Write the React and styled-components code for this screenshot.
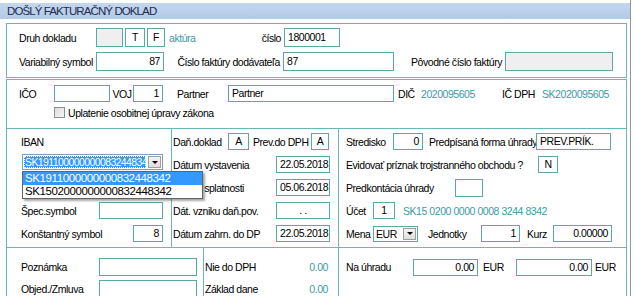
import React from 'react';
import styled, { createGlobalStyle } from 'styled-components';

const GlobalStyle = createGlobalStyle`
  body {
    margin: 0;
    background: #fff;
    font-family: "Liberation Sans", Arial, sans-serif;
    font-size: 10.5px;
    letter-spacing: -0.45px;
    color: #000;
  }
`;

const TEAL = '#6bb7b7';
const TEAL_TEXT = '#3c9aa8';

const Window = styled.div`
  width: 631px;
  height: 296px;
  box-sizing: border-box;
  border-right: 1px solid #8d9a9a;
  padding-top: 3px;
  overflow: hidden;
`;

const TitleBar = styled.div`
  height: 16px;
  line-height: 17px;
  padding-left: 7px;
  font-size: 11.5px;
  letter-spacing: -0.9px;
  color: #1d2b4c;
  background: linear-gradient(#c3d7ee, #b2cae6);
`;

const Body = styled.div`
  padding: 4px 3px 0 6px;
`;

const Box = styled.div`
  border: 1px solid ${TEAL};
  ${p => p.noTop && 'border-top: none;'}
  ${p => p.gapTop && `margin-top: ${p.gapTop}px;`}
`;

const Stack = styled.div`
  display: flex;
  flex-direction: column;
  gap: ${p => p.gap || 0}px;
  padding: ${p => p.pad || '0'};
`;

const Row = styled.div`
  display: flex;
  align-items: ${p => (p.top ? 'flex-start' : 'center')};
  padding-top: ${p => p.top || 0}px;
  box-sizing: border-box;
  height: ${p => p.h || 23}px;
  margin-left: ${p => p.ml || 0}px;
`;

const Label = styled.span`
  flex: none;
  width: ${p => (p.w ? `${p.w}px` : 'auto')};
  margin-left: ${p => p.ml || 0}px;
  text-align: ${p => (p.right ? 'right' : 'left')};
  padding-right: ${p => (p.right ? 3 : 0)}px;
  box-sizing: border-box;
  white-space: nowrap;
`;

const Teal = styled(Label)`
  color: ${TEAL_TEXT};
`;

const Input = styled.div`
  flex: none;
  box-sizing: border-box;
  width: ${p => p.w}px;
  height: ${p => p.h || 17}px;
  margin-left: ${p => p.ml || 0}px;
  border: 1px solid #5aa8a8;
  background: ${p => (p.disabled ? '#efefef' : '#fff')};
  padding: 0 3px;
  line-height: ${p => (p.h || 17) - 2}px;
  text-align: ${p => p.align || 'left'};
  white-space: nowrap;
  overflow: hidden;
`;

const Check = styled.span`
  width: 11px;
  height: 11px;
  box-sizing: border-box;
  border: 1px solid #8f8f8f;
  background: linear-gradient(135deg, #dcdcdc, #f6f6f6);
  margin-right: 3px;
`;

const Grid = styled.div`
  display: grid;
  grid-template-columns: ${p => p.cols};
`;

const Col = styled(Stack)`
  border-right: ${p => (p.last ? 'none' : `1px solid ${TEAL}`)};
`;

const SelectWrap = styled.div`
  position: relative;
  flex: none;
  display: flex;
  width: ${p => p.w}px;
  height: ${p => p.h || 16}px;
  margin-left: ${p => p.ml || 0}px;
  box-sizing: border-box;
  border: 1px solid ${p => (p.focus ? '#7f9db9' : '#5aa8a8')};
  background: #fff;
`;

const SelectValue = styled.div`
  flex: 1;
  overflow: hidden;
  white-space: nowrap;
  padding: 0 1px;
  line-height: ${p => p.lh}px;
  margin: 1px;
  ${p =>
    p.active &&
    `background: #3399ff; color: #fff; outline: 1px dotted #fff; outline-offset: -1px; letter-spacing: -0.6px;`}
`;

const ArrowBtn = styled.div`
  width: 13px;
  flex: none;
  margin: 1px;
  box-sizing: border-box;
  border: 1px solid #a0a0a0;
  background: linear-gradient(#f4f4f4, #dedede);
  display: flex;
  align-items: center;
  justify-content: center;
  &::after {
    content: '';
    border-left: 3px solid transparent;
    border-right: 3px solid transparent;
    border-top: 3px solid #000;
  }
`;

const DropList = styled.div`
  position: absolute;
  left: -1px;
  top: 16px;
  width: 181px;
  box-sizing: border-box;
  border: 1px solid #646464;
  background: #fff;
  box-shadow: 2px 2px 2px rgba(0, 0, 0, 0.35);
  z-index: 5;
`;

const DropItem = styled.div`
  height: 13px;
  line-height: 13px;
  padding-left: 2px;
  font-size: 11.5px;
  letter-spacing: -0.4px;
  ${p => p.active && 'background: #3399ff; color: #fff;'}
`;

const Between = styled(Row)`
  justify-content: space-between;
  padding-right: 10px;
`;

export default function App() {
  return (
    <>
      <GlobalStyle />
      <Window>
        <TitleBar>DOŠLÝ FAKTURAČNÝ DOKLAD</TitleBar>
        <Body>
          <Box>
            <Stack gap={5} pad="4px 12px 6px">
              <Row h={19}>
                <Label w={77}>Druh dokladu</Label>
                <Input w={27} h={19} disabled />
                <Input w={20} h={19} ml={2} align="center">T</Input>
                <Input w={18} h={19} ml={2} align="center">F</Input>
                <Teal w={60} ml={4}>aktúra</Teal>
                <Label w={55} right>číslo</Label>
                <Input w={56} h={19}>1800001</Input>
              </Row>
              <Row h={19}>
                <Label w={77}>Variabilný symbol</Label>
                <Input w={68} h={19} align="right">87</Input>
                <Label w={119} right>Číslo faktúry dodávateľa</Label>
                <Input w={111} h={19}>87</Input>
                <Label w={111} right>Pôvodné číslo faktúry</Label>
                <Input w={108} h={19} disabled />
              </Row>
            </Stack>
          </Box>

          <Box gapTop={1}>
            <Stack pad="4px 12px 6px">
              <Row h={19}>
                <Label w={35}>IČO</Label>
                <Input w={56} />
                <Label w={23}>&nbsp;VOJ</Label>
                <Input w={30} align="right">1</Input>
                <Label w={51} ml={14}>Partner</Label>
                <Input w={166}>Partner</Input>
                <Label w={23} ml={4}>DIČ</Label>
                <Teal w={81}>2020095605</Teal>
                <Label w={40}>IČ DPH</Label>
                <Teal>SK2020095605</Teal>
              </Row>
              <Row h={19} ml={35}>
                <Check />
                <Label>Uplatenie osobitnej úpravy zákona</Label>
              </Row>
            </Stack>
          </Box>

          <Box noTop>
            <Grid cols="165px 167px 1fr">
              <Col pad="1px 0 2px 14px">
                <Row>
                  <Label>IBAN</Label>
                </Row>
                <Row top={1}>
                  <SelectWrap w={141} ml={1} focus>
                    <SelectValue active lh={12}>SK1911000000000832448342</SelectValue>
                    <ArrowBtn />
                    <DropList>
                      <DropItem active>SK1911000000000832448342</DropItem>
                      <DropItem>SK1502000000000832448342</DropItem>
                    </DropList>
                  </SelectWrap>
                </Row>
                <Row />
                <Row>
                  <Label w={78}>Špec.symbol</Label>
                  <Input w={64} />
                </Row>
                <Row>
                  <Label w={112}>Konštantný symbol</Label>
                  <Input w={30} align="right">8</Input>
                </Row>
              </Col>

              <Col pad="1px 0 2px 1px">
                <Row>
                  <Label w={55}>Daň.doklad</Label>
                  <Input w={21} align="center">A</Input>
                  <Label w={58} ml={4}>Prev.do DPH</Label>
                  <Input w={18} align="center">A</Input>
                </Row>
                <Row>
                  <Label w={103}>Dátum vystavenia</Label>
                  <Input w={54} align="center">22.05.2018</Input>
                </Row>
                <Row>
                  <Label w={103}>Dátum splatnosti</Label>
                  <Input w={54} align="center">05.06.2018</Input>
                </Row>
                <Row>
                  <Label w={103}>Dát. vzniku daň.pov.</Label>
                  <Input w={54} align="center">. .</Input>
                </Row>
                <Row>
                  <Label w={103}>Dátum zahrn. do DP</Label>
                  <Input w={54} align="center">22.05.2018</Input>
                </Row>
              </Col>

              <Col last pad="1px 0 2px 7px">
                <Row>
                  <Label w={47}>Stredisko</Label>
                  <Input w={30} align="right">0</Input>
                  <Label w={107} ml={6}>Predpísaná forma úhrady</Label>
                  <Input w={75}>PREV.PRÍK.</Input>
                </Row>
                <Row>
                  <Label w={192}>Evidovať príznak trojstranného obchodu ?</Label>
                  <Input w={20} align="center">N</Input>
                </Row>
                <Row>
                  <Label w={109}>Predkontácia úhrady</Label>
                  <Input w={28} h={18} />
                </Row>
                <Row>
                  <Label w={27}>Účet</Label>
                  <Input w={22} align="center">1</Input>
                  <Teal ml={8}>SK15 0200 0000 0008 3244 8342</Teal>
                </Row>
                <Row>
                  <Label w={27}>Mena</Label>
                  <SelectWrap w={45} h={16}>
                    <SelectValue lh={12}>EUR</SelectValue>
                    <ArrowBtn />
                  </SelectWrap>
                  <Label w={53} ml={10}>Jednotky</Label>
                  <Input w={39} align="right">1</Input>
                  <Label w={26} ml={7}>Kurz</Label>
                  <Input w={59} align="right">0.00000</Input>
                </Row>
              </Col>
            </Grid>
          </Box>

          <Box noTop>
            <Grid cols="197px 135px 1fr">
              <Col pad="8px 0 0 14px">
                <Row h={22}>
                  <Label w={78}>Poznámka</Label>
                  <Input w={98} h={18} />
                </Row>
                <Row h={22}>
                  <Label w={78}>Objed./Zmluva</Label>
                  <Input w={98} h={18} />
                </Row>
              </Col>
              <Col pad="8px 0 0 1px">
                <Between h={22}>
                  <Label>Nie do DPH</Label>
                  <Teal>0.00</Teal>
                </Between>
                <Between h={22}>
                  <Label>Základ dane</Label>
                  <Teal>0.00</Teal>
                </Between>
              </Col>
              <Col last pad="8px 0 0 7px">
                <Row h={22}>
                  <Label w={67}>Na úhradu</Label>
                  <Input w={65} align="right">0.00</Input>
                  <Label w={33} ml={5}>EUR</Label>
                  <Input w={76} align="right">0.00</Input>
                  <Label ml={3}>EUR</Label>
                </Row>
              </Col>
            </Grid>
          </Box>
        </Body>
      </Window>
    </>
  );
}
